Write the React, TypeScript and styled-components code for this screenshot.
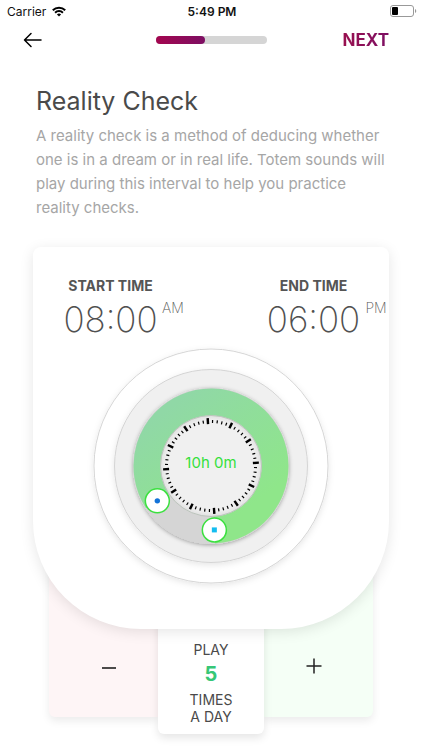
import React, { useState } from "react";
import styled, { createGlobalStyle } from "styled-components";

const GlobalStyle = createGlobalStyle`
  * { box-sizing: border-box; }
  body {
    margin: 0;
    background: #fff;
    color: #4a4a4a;
    font-family: Inter, "Liberation Sans", sans-serif;
  }
  button { font: inherit; border: 0; padding: 0; background: none; cursor: pointer; }
`;

const Screen = styled.main`
  display: flex;
  flex-direction: column;
  overflow: hidden;
  padding-bottom: 16px;
`;

const StatusBar = styled.div`
  display: grid;
  grid-template-columns: 1fr auto 1fr;
  align-items: center;
  height: 22px;
  padding: 0 5px 0 7px;
  font-size: 12px;
  color: #111;
`;

const Carrier = styled.div`
  display: flex;
  align-items: center;
  gap: 6px;
`;

const Clock = styled.time`
  font-weight: 600;
`;

const Battery = styled.svg`
  justify-self: end;
`;

const NavBar = styled.nav`
  display: grid;
  grid-template-columns: 1fr 111px 1fr;
  align-items: center;
  height: 36px;
  padding: 0 22px;
`;

const BackButton = styled.button`
  display: flex;
  justify-self: start;
`;

const Progress = styled.div`
  height: 8px;
  border-radius: 4px;
  background: #d5d5d5;
`;

const ProgressFill = styled.div`
  height: 8px;
  border-radius: 4px;
  background: linear-gradient(90deg, #a3064f, #7d0f63);
`;

const NextButton = styled.button`
  justify-self: end;
  margin-right: 11px;
  font-size: 17px;
  line-height: 20px;
  font-weight: 700;
  background: linear-gradient(90deg, #99104f, #7d0f63);
  background-clip: text;
  color: transparent;
`;

const Intro = styled.header`
  padding: 28px 36px 0;
`;

const Title = styled.h1`
  margin: 0;
  font-size: 25px;
  line-height: 30px;
  font-weight: 400;
`;

const Description = styled.p`
  margin: 8px 0 0;
  font-size: 15px;
  line-height: 24px;
  color: #a6a6a6;
`;

const Card = styled.section`
  z-index: 1;
  display: flex;
  flex-direction: column;
  margin: 27px 33px 0;
  padding: 30px 2px 45px 30px;
  border-radius: 8px 8px 108px 108px;
  background: #fff;
  box-shadow: 0 3px 14px rgba(0, 0, 0, 0.1);
`;

const Times = styled.div`
  display: flex;
  justify-content: space-between;
`;

const TimeGroup = styled.div`
  display: grid;
  grid-template-columns: 95px 22px;
  column-gap: 4px;
  justify-items: center;
`;

const TimeLabel = styled.span`
  font-size: 14px;
  line-height: 18px;
  font-weight: 700;
  color: #555;
`;

const TimeValue = styled.span`
  grid-row: 2;
  margin-top: 4px;
  font-size: 35px;
  line-height: 40px;
  font-weight: 200;
  color: #505050;
`;

const Period = styled.span`
  grid-row: 2;
  margin-top: 4px;
  font-size: 14px;
  line-height: 18px;
  font-weight: 200;
  color: #555;
`;

const Dial = styled.div`
  display: grid;
  place-items: center;
  margin: 9px 28px 0 0;
  > * { grid-area: 1 / 1; }
`;

const DialArt = styled.svg`
  overflow: visible;
`;

const Duration = styled.output`
  margin-bottom: 6px;
  font-size: 15px;
  line-height: 20px;
  color: #35e03c;
`;

const Stepper = styled.section`
  display: flex;
  align-items: flex-start;
  margin: -80px 49px 0;
`;

const StepButton = styled.button<{ $side: "left" | "right" }>`
  display: flex;
  flex: 1;
  align-items: center;
  justify-content: center;
  height: 168px;
  padding: ${(p) => (p.$side === "left" ? "70px 0 0 10px" : "66px 10px 0 0")};
  border-radius: ${(p) => (p.$side === "left" ? "0 0 0 6px" : "0 0 6px 0")};
  background: ${(p) => (p.$side === "left" ? "#fef5f6" : "#f5fff6")};
  box-shadow: 0 4px 8px rgba(0, 0, 0, 0.08);
`;

const Count = styled.div`
  position: relative;
  display: flex;
  flex-direction: column;
  align-items: center;
  width: 106px;
  padding: 92px 0 9px;
  border-radius: 0 0 6px 6px;
  background: #fff;
  box-shadow: 0 4px 8px rgba(0, 0, 0, 0.1);
  font-size: 14px;
  line-height: 17px;
  text-align: center;
`;

const CountValue = styled.output`
  padding: 4px 0 5px;
  font-size: 20px;
  line-height: 24px;
  font-weight: 700;
  color: #36c777;
`;

const CX = 118;
const at = (deg: number, r: number): [number, number] => {
  const a = ((deg - 90) * Math.PI) / 180;
  return [CX + r * Math.cos(a), CX + r * Math.sin(a)];
};

const START = 237;
const END = 177;
const TICK_OFFSET = -4;

function DialDrawing() {
  const [sx, sy] = at(START, 64);
  const [ex, ey] = at(END, 64);
  return (
    <DialArt width="236" height="236" viewBox="0 0 236 236" aria-hidden="true">
      <defs>
        <linearGradient id="range" x1="0.1" y1="0.1" x2="0.7" y2="0.9">
          <stop offset="0" stopColor="#90d8a6" />
          <stop offset="1" stopColor="#8fe68a" />
        </linearGradient>
        <radialGradient id="face">
          <stop offset="0.9" stopColor="#f0f0f0" />
          <stop offset="1" stopColor="#e0e0e0" />
        </radialGradient>
        <filter id="soft" x="-20%" y="-20%" width="140%" height="140%">
          <feDropShadow dx="0" dy="2" stdDeviation="3" floodOpacity="0.1" />
        </filter>
        <filter id="deep" x="-20%" y="-20%" width="140%" height="140%">
          <feDropShadow dx="0" dy="1" stdDeviation="2" floodOpacity="0.35" />
        </filter>
      </defs>
      <circle cx={CX} cy={CX} r="117" fill="#fff" stroke="#d6d6d6" filter="url(#soft)" />
      <circle cx={CX} cy={CX} r="96.5" fill="#f0f0f0" stroke="#d4d4d4" filter="url(#soft)" />
      <circle cx={CX} cy={CX} r="78" fill="#d5d5d5" filter="url(#deep)" />
      <path
        d={`M${sx} ${sy} A64 64 0 1 1 ${ex} ${ey}`}
        fill="none"
        stroke="url(#range)"
        strokeWidth="27"
      />
      <circle cx={CX} cy={CX} r="50.5" fill="url(#face)" stroke="#bcc4bc" />
      {Array.from({ length: 60 }, (_, i) => {
        const major = i % 5 === 0;
        const deg = i * 6 + TICK_OFFSET;
        const [x1, y1] = at(deg, major ? 48 : 46);
        const [x2, y2] = at(deg, major ? 42 : 43);
        return (
          <line key={i} x1={x1} y1={y1} x2={x2} y2={y2} stroke="#000" strokeWidth={major ? 2.4 : 1.2} />
        );
      })}
      <circle cx={sx} cy={sy} r="12" fill="#fff" stroke="#3be03f" strokeWidth="1.5" />
      <circle cx={sx} cy={sy} r="2.7" fill="#1373d8" />
      <circle cx={ex} cy={ey} r="12" fill="#fff" stroke="#3be03f" strokeWidth="1.5" />
      <rect x={ex - 2.5} y={ey - 2.5} width="5" height="5" fill="#14bdf0" />
    </DialArt>
  );
}

export default function App() {
  const [count, setCount] = useState(5);
  return (
    <>
      <GlobalStyle />
      <Screen>
        <StatusBar>
          <Carrier>
            Carrier
            <svg width="14" height="11" viewBox="0 0 14 11" fill="none" stroke="#000" strokeWidth="2">
              <path d="M0.8 4.2a8.8 8.8 0 0 1 12.4 0" />
              <path d="M3.1 6.7a5.5 5.5 0 0 1 7.8 0" />
              <path d="M7 10.6 4.9 8.5a3 3 0 0 1 4.2 0Z" fill="#000" stroke="none" />
            </svg>
          </Carrier>
          <Clock>5:49 PM</Clock>
          <Battery width="27" height="12" viewBox="0 0 27 12">
            <rect x="0.5" y="0.5" width="23" height="11" rx="2.5" fill="#fff" stroke="#999" />
            <rect x="2" y="2" width="6" height="8" rx="1" fill="#000" />
            <path d="M25 4a2.2 2.2 0 0 1 0 4Z" fill="#999" />
          </Battery>
        </StatusBar>

        <NavBar>
          <BackButton aria-label="Back">
            <svg width="20" height="16" viewBox="0 0 20 16" fill="none" stroke="#000" strokeWidth="1.5" strokeLinecap="round" strokeLinejoin="round">
              <path d="M19 8H2.5M9 1.5 2.5 8 9 14.5" />
            </svg>
          </BackButton>
          <Progress role="progressbar" aria-label="Setup progress" aria-valuenow={45} aria-valuemin={0} aria-valuemax={100}>
            <ProgressFill style={{ width: "45%" }} />
          </Progress>
          <NextButton>NEXT</NextButton>
        </NavBar>

        <Intro>
          <Title>Reality Check</Title>
          <Description>
            A reality check is a method of deducing whether one is in a dream or in real life. Totem
            sounds will play during this interval to help you practice reality checks.
          </Description>
        </Intro>

        <Card>
          <Times>
            <TimeGroup>
              <TimeLabel>START TIME</TimeLabel>
              <TimeValue>08:00</TimeValue>
              <Period>AM</Period>
            </TimeGroup>
            <TimeGroup>
              <TimeLabel>END TIME</TimeLabel>
              <TimeValue>06:00</TimeValue>
              <Period>PM</Period>
            </TimeGroup>
          </Times>
          <Dial>
            <DialDrawing />
            <Duration>10h 0m</Duration>
          </Dial>
        </Card>

        <Stepper>
          <StepButton $side="left" aria-label="Fewer times" onClick={() => setCount(Math.max(1, count - 1))}>
            <svg width="16" height="16" viewBox="0 0 16 16" stroke="#111" strokeWidth="1.5">
              <path d="M1 8h14" />
            </svg>
          </StepButton>
          <Count>
            <span>PLAY</span>
            <CountValue>{count}</CountValue>
            <span>TIMES</span>
            <span>A DAY</span>
          </Count>
          <StepButton $side="right" aria-label="More times" onClick={() => setCount(count + 1)}>
            <svg width="16" height="16" viewBox="0 0 16 16" stroke="#222" strokeWidth="1.5">
              <path d="M0.5 8h15M8 0.5v15" />
            </svg>
          </StepButton>
        </Stepper>
      </Screen>
    </>
  );
}
